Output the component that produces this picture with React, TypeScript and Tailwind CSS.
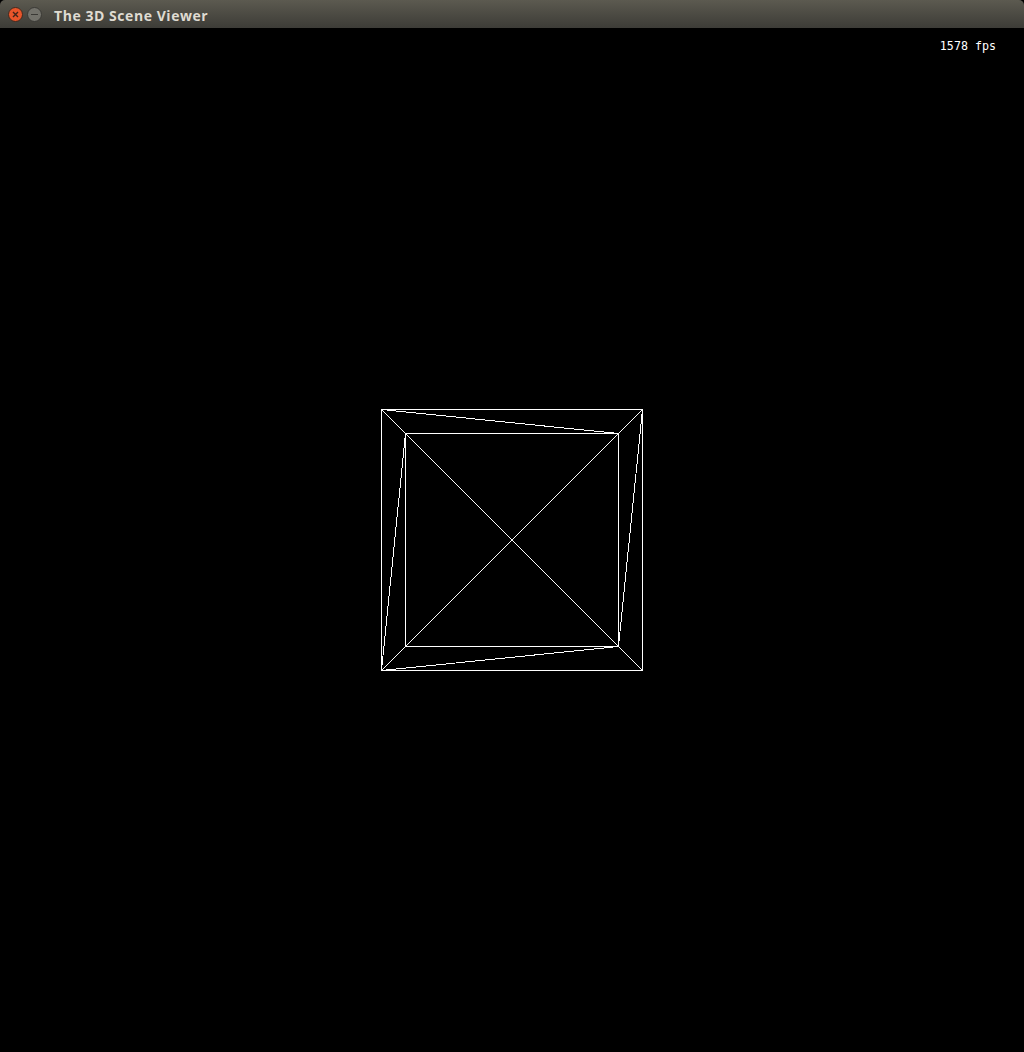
const lines: [number, number, number, number][] = [
	[0.5, 0.5, 261.5, 261.5],
	[261.5, 0.5, 0.5, 261.5],
	[0.5, 0.5, 237.5, 24.5],
	[261.5, 0.5, 237.5, 237.5],
	[237.5, 237.5, 0.5, 261.5],
	[0.5, 261.5, 24.5, 24.5],
];

function TitleBar() {
	return (
		<div className="flex h-7 items-center rounded-t-[5px] bg-gradient-to-b from-[#5c5a50] to-[#3d3c37] pl-2">
			<div className="flex h-[15px] w-[15px] items-center justify-center rounded-full border border-[#3f2a20] bg-[#e9552a]">
				<svg width="7" height="7" viewBox="0 0 7 7">
					<path d="M1 1L6 6M6 1L1 6" stroke="#40241a" strokeWidth="1.4" />
				</svg>
			</div>
			<div className="ml-1 flex h-[15px] w-[15px] items-center justify-center rounded-full border border-[#3a3935] bg-[#73726b]">
				<div className="h-px w-[7px] bg-[#3a3935]" />
			</div>
			<span className="ml-3 mt-[2px] font-['Open_Sans',sans-serif] text-[14px] font-bold tracking-[0.55px] text-[#dfdbd2]">
				The 3D Scene Viewer
			</span>
		</div>
	);
}

export default function App() {
	return (
		<div className="h-[1052px] w-[1024px] overflow-hidden bg-black">
			<TitleBar />
			<div className="relative flex h-[1024px] items-center justify-center">
				<span className="absolute right-[28px] top-[10px] font-['DejaVu_Sans_Mono',monospace] text-[11.67px] leading-4 text-white">
					1578 fps
				</span>
				<svg width="262" height="262" viewBox="0 0 262 262" shapeRendering="crispEdges">
					<rect x="0.5" y="0.5" width="261" height="261" fill="none" stroke="#fff" />
					<rect x="24.5" y="24.5" width="213" height="213" fill="none" stroke="#fff" />
					{lines.map(([x1, y1, x2, y2]) => (
						<line key={`${x1}-${y1}-${x2}`} x1={x1} y1={y1} x2={x2} y2={y2} stroke="#fff" />
					))}
				</svg>
			</div>
		</div>
	);
}
